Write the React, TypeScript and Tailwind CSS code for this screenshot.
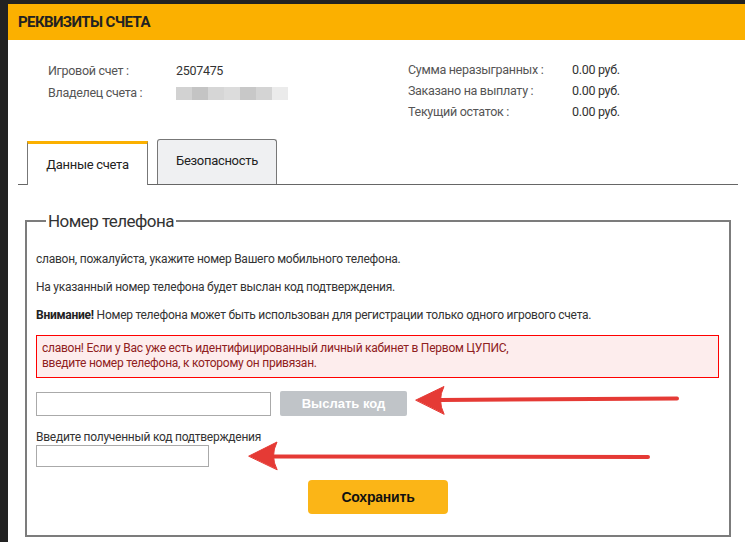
import React from "react"

const info = {
  left: [
    { label: "Игровой счет :", value: "2507475" },
    { label: "Владелец счета :", value: null },
  ],
  right: [
    { label: "Сумма неразыгранных :", value: "0.00 руб." },
    { label: "Заказано на выплату :", value: "0.00 руб." },
    { label: "Текущий остаток :", value: "0.00 руб." },
  ],
}

function BlurredName() {
  return (
    <div className="flex h-[13px] w-[112px]">
      <div className="h-full w-[16px] bg-[#d2d2d2]" />
      <div className="h-full w-[16px] bg-[#c4c4c4]" />
      <div className="h-full w-[16px] bg-[#d6d6d6]" />
      <div className="h-full w-[16px] bg-[#dcdcdc]" />
      <div className="h-full w-[16px] bg-[#c8c8c8]" />
      <div className="h-full w-[16px] bg-[#d4d4d4]" />
      <div className="h-full w-[16px] bg-[#ebebeb]" />
    </div>
  )
}

function Arrows() {
  return (
    <svg
      className="pointer-events-none absolute left-0 top-0"
      width="745"
      height="542"
      viewBox="0 0 745 542"
    >
      <g fill="#e53a35" stroke="#e53a35" strokeLinecap="round">
        <path d="M440 400 L677 398.5" strokeWidth="4" />
        <path d="M416 400 L444 386.5 Q437 400 444 414 Z" strokeWidth="1" />
        <path d="M273 456.5 L648 457" strokeWidth="4" />
        <path d="M249 456 L277 442 Q270 456 277 469.5 Z" strokeWidth="1" />
      </g>
    </svg>
  )
}

export default function App() {
  return (
    <div
      className="relative h-[542px] overflow-hidden bg-[#222] pl-2 pt-1"
      style={{ fontFamily: "Roboto, 'Noto Sans', sans-serif" }}
    >
      <div className="h-full bg-white">
        <div className="flex h-9 items-center bg-[#fbb000] pl-[10px]">
          <h1 className="text-[15px] font-bold tracking-[-0.6px] text-[#222]">
            РЕКВИЗИТЫ СЧЕТА
          </h1>
        </div>

        <div className="flex pl-10 pt-5 text-[12.5px] tracking-[-0.3px]">
          <div className="w-[360px]">
            {info.left.map((row) => (
              <div key={row.label} className="flex h-[22px] items-center">
                <span className="w-[128px] text-[#555]">{row.label}</span>
                {row.value ? (
                  <span className="text-[#333]">{row.value}</span>
                ) : (
                  <BlurredName />
                )}
              </div>
            ))}
          </div>
          <div>
            {info.right.map((row) => (
              <div key={row.label} className="flex h-[21px] items-center">
                <span className="w-[164px] text-[#555]">{row.label}</span>
                <span className="text-[#333]">{row.value}</span>
              </div>
            ))}
          </div>
        </div>

        <div className="ml-[10px] mr-[7px] mt-[16px]">
          <div className="flex items-end border-b border-[#666] pl-[9px] text-[13px] tracking-[-0.3px]">
            <div className="-mb-px flex h-[44px] w-[121px] items-center justify-center border-x border-t-[3px] border-x-[#777] border-t-[#fbb000] bg-white pt-[1px] text-[#222]">
              Данные счета
            </div>
            <div className="ml-[9px] flex h-[45px] w-[120px] items-center justify-center rounded-t-[3px] border-x border-t border-[#777] bg-[#eff0f2] pb-[2px] text-[#222]">
              Безопасность
            </div>
          </div>

          <fieldset className="mx-[7px] mt-[25px] border-2 border-[#7c7c7c] px-[9px] pb-[21px] text-[12px] tracking-[-0.25px] text-[#333]">
            <legend className="ml-[10px] px-[2px] text-[17px] leading-[22px] tracking-[-0.55px] text-[#333]">
              Номер телефона
            </legend>

            <p className="mt-[19px] leading-[16px]">
              славон, пожалуйста, укажите номер Вашего мобильного телефона.
            </p>
            <p className="mt-[12px] leading-[16px]">
              На указанный номер телефона будет выслан код подтверждения.
            </p>
            <p className="mt-[12px] leading-[16px]">
              <b className="font-bold text-[#222]">Внимание!</b> Номер телефона может быть
              использован для регистрации только одного игрового счета.
            </p>

            <div className="mr-px mt-[12px] border border-[#f00] bg-[#fdeded] px-[5px] pb-[6px] pt-[5px] leading-[15px] text-[#8f2020]">
              славон! Если у Вас уже есть идентифицированный личный кабинет в Первом ЦУПИС,
              <br />
              введите номер телефона, к которому он привязан.
            </div>

            <div className="mt-[13px] flex items-center">
              <input
                type="text"
                className="h-[24px] w-[235px] border border-[#aaa] bg-white outline-none"
              />
              <button
                type="button"
                className="ml-[9px] h-[25px] w-[127px] rounded-[2px] bg-[#c0c4c8] text-[13px] font-bold tracking-normal text-white"
                style={{ fontFamily: "'Liberation Sans', Arial, sans-serif" }}
              >
                Выслать код
              </button>
            </div>

            <label className="mt-[14px] block leading-[15px] text-[#333]">
              Введите полученный код подтверждения
            </label>
            <input
              type="text"
              className="block h-[22px] w-[173px] border border-[#aaa] bg-white outline-none"
            />

            <div className="mt-[13px] flex justify-center">
              <button
                type="button"
                className="h-[34px] w-[140px] rounded-[4px] bg-[#fbb517] text-[14px] font-bold tracking-[-0.2px] text-[#111]"
                style={{ fontFamily: "'Liberation Sans', Arial, sans-serif" }}
              >
                Сохранить
              </button>
            </div>
          </fieldset>
        </div>
      </div>
      <Arrows />
    </div>
  )
}
